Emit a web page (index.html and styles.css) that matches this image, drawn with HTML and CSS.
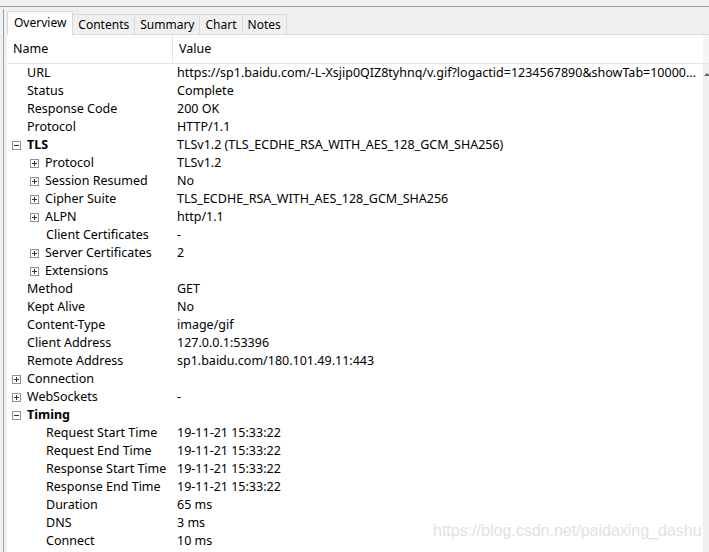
FILE: index.html
```html
<!DOCTYPE html>
<html lang="en">

<head>
  <meta charset="UTF-8">
  <title>Overview</title>
  <link rel="stylesheet" href="styles.css">
</head>

<body>
  <div class="topbar"></div>

  <div class="frame">
    <!-- Tabs -->
    <div class="tabs">
      <div class="tab active">Overview</div>
      <div class="tab">Contents</div>
      <div class="tab">Summary</div>
      <div class="tab">Chart</div>
      <div class="tab">Notes</div>
    </div>

    <div class="panel">
      <div class="table">
        <div class="head">
          <div class="col-name">Name</div>
          <div class="col-value">Value</div>
        </div>

        <div class="row"><div class="name l1">URL</div><div class="value">https://sp1.baidu.com/-L-Xsjip0QIZ8tyhnq/v.gif?logactid=1234567890&amp;showTab=10000...</div></div>
        <div class="row"><div class="name l1">Status</div><div class="value">Complete</div></div>
        <div class="row"><div class="name l1">Response Code</div><div class="value">200 OK</div></div>
        <div class="row"><div class="name l1">Protocol</div><div class="value">HTTP/1.1</div></div>
        <div class="row"><div class="name l0 bold"><span class="box minus"></span>TLS</div><div class="value">TLSv1.2 (TLS_ECDHE_RSA_WITH_AES_128_GCM_SHA256)</div></div>
        <div class="row"><div class="name l2"><span class="box plus"></span>Protocol</div><div class="value">TLSv1.2</div></div>
        <div class="row"><div class="name l2"><span class="box plus"></span>Session Resumed</div><div class="value">No</div></div>
        <div class="row"><div class="name l2"><span class="box plus"></span>Cipher Suite</div><div class="value">TLS_ECDHE_RSA_WITH_AES_128_GCM_SHA256</div></div>
        <div class="row"><div class="name l2"><span class="box plus"></span>ALPN</div><div class="value">http/1.1</div></div>
        <div class="row"><div class="name l3">Client Certificates</div><div class="value">-</div></div>
        <div class="row"><div class="name l2"><span class="box plus"></span>Server Certificates</div><div class="value">2</div></div>
        <div class="row"><div class="name l2"><span class="box plus"></span>Extensions</div><div class="value"></div></div>
        <div class="row"><div class="name l1">Method</div><div class="value">GET</div></div>
        <div class="row"><div class="name l1">Kept Alive</div><div class="value">No</div></div>
        <div class="row"><div class="name l1">Content-Type</div><div class="value">image/gif</div></div>
        <div class="row"><div class="name l1">Client Address</div><div class="value">127.0.0.1:53396</div></div>
        <div class="row"><div class="name l1">Remote Address</div><div class="value">sp1.baidu.com/180.101.49.11:443</div></div>
        <div class="row"><div class="name l0"><span class="box plus"></span>Connection</div><div class="value"></div></div>
        <div class="row"><div class="name l0"><span class="box plus"></span>WebSockets</div><div class="value">-</div></div>
        <div class="row"><div class="name l0 bold"><span class="box minus"></span>Timing</div><div class="value"></div></div>
        <div class="row"><div class="name l3">Request Start Time</div><div class="value">19-11-21 15:33:22</div></div>
        <div class="row"><div class="name l3">Request End Time</div><div class="value">19-11-21 15:33:22</div></div>
        <div class="row"><div class="name l3">Response Start Time</div><div class="value">19-11-21 15:33:22</div></div>
        <div class="row"><div class="name l3">Response End Time</div><div class="value">19-11-21 15:33:22</div></div>
        <div class="row"><div class="name l3">Duration</div><div class="value">65 ms</div></div>
        <div class="row"><div class="name l3">DNS</div><div class="value">3 ms</div></div>
        <div class="row"><div class="name l3">Connect</div><div class="value">10 ms</div></div>
      </div>

      <!-- Vertical scrollbar (mostly cut off) -->
      <div class="scrollbar">
        <div class="head-cap"></div>
        <span class="arrow"></span>
      </div>
    </div>
  </div>

  <div class="watermark">https://blog.csdn.net/paidaxing_dashu</div>
</body>

</html>
```

FILE: styles.css
```css
html,
body {
  margin: 0;
  height: 100%;
  overflow: hidden;
}

body {
  font-family: "Noto Sans", "Open Sans", sans-serif;
  font-size: 12.5px;
  color: #000000;
  background-color: #f0f0f0;
  position: relative;
}

.topbar {
  height: 6px;
  border-bottom: 1px solid #a0a0a0;
}

.frame {
  margin: 2px 0 0 3px;
  border-left: 1px solid #a0a0a0;
  padding-left: 3px;
  height: 560px;
  display: flex;
  flex-direction: column;
}

/* Tabs */
.tabs {
  display: flex;
  align-items: flex-end;
  height: 24px;
  margin-top: 1px;
  font-size: 12px;
}

.tab {
  height: 20px;
  line-height: 19px;
  padding: 0 5px;
  border: 1px solid #d9d9d9;
  border-bottom: none;
  border-left: none;
  background-color: #f0f0f0;
  box-sizing: border-box;
}

.tab.active {
  height: 24px;
  line-height: 22px;
  padding: 0 6px;
  border-left: 1px solid #d9d9d9;
  background-color: #ffffff;
  margin-bottom: -1px;
  position: relative;
}

.panel {
  flex: 1;
  display: flex;
  background-color: #ffffff;
  border-top: 1px solid #d9d9d9;
}

.table {
  flex: 1;
  min-width: 0;
}

.head {
  display: flex;
  height: 28px;
  border-bottom: 1px solid #e5e5e5;
}

.head div {
  line-height: 28px;
}

.col-name {
  width: 166px;
  box-sizing: border-box;
  padding-left: 6px;
  border-right: 1px solid #e5e5e5;
}

.col-value {
  padding-left: 6px;
}

.row {
  display: flex;
  height: 18px;
  line-height: 18px;
}

.name {
  width: 165px;
  box-sizing: border-box;
  flex-shrink: 0;
  display: flex;
  align-items: center;
  white-space: nowrap;
}

.name.l0 {
  padding-left: 5px;
}

.name.l1 {
  padding-left: 20px;
}

.name.l2 {
  padding-left: 23px;
}

.name.l3 {
  padding-left: 39px;
}

.bold {
  font-weight: bold;
}

.value {
  padding-left: 5px;
  white-space: nowrap;
  overflow: hidden;
  flex: 1;
  min-width: 0;
}

/* Expander boxes */
.box {
  width: 7px;
  height: 7px;
  border: 1px solid #919191;
  margin-right: 6px;
  position: relative;
  flex-shrink: 0;
  background-color: #ffffff;
}

.box:before {
  content: "";
  position: absolute;
  left: 1px;
  top: 3px;
  width: 5px;
  height: 1px;
  background-color: #333333;
}

.box.plus:after {
  content: "";
  position: absolute;
  left: 3px;
  top: 1px;
  width: 1px;
  height: 5px;
  background-color: #333333;
}

.scrollbar {
  width: 6px;
  background-color: #f0f0f0;
  position: relative;
}

.scrollbar .head-cap {
  height: 28px;
  background-color: #f5f5f5;
  border-bottom: 1px solid #e5e5e5;
}

.scrollbar .arrow {
  position: absolute;
  left: 1px;
  top: 38px;
  border-left: 3px solid transparent;
  border-right: 3px solid transparent;
  border-bottom: 3px solid #606060;
}

.watermark {
  position: absolute;
  left: 433px;
  top: 522px;
  font-family: "Liberation Sans", Arial, sans-serif;
  font-size: 16px;
  color: #e2e2e2;
  white-space: nowrap;
}
```
